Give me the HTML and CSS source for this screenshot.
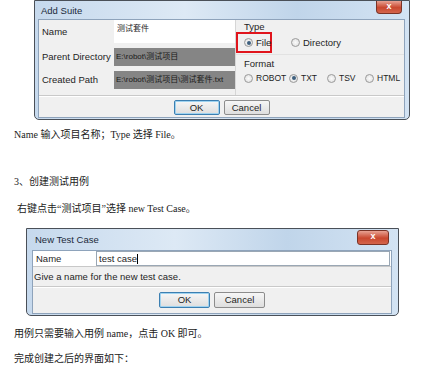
FILE: index.html
```html
<!DOCTYPE html>
<html lang="zh">
<head>
    <meta charset="UTF-8">
    <title>创建测试用例</title>
    <link rel="stylesheet" href="styles.css">
</head>
<body>
    <!-- Add Suite 对话框 -->
    <div class="win suite-win">
        <div class="titlebar">
            <span class="title">Add Suite</span>
            <span class="close">x</span>
        </div>
        <div class="client">
            <div class="suite-top">
                <div class="fields">
                    <div class="row">
                        <span class="label">Name</span>
                        <span class="field white">测试套件</span>
                    </div>
                    <div class="row">
                        <span class="label">Parent Directory</span>
                        <span class="field grey">E:\robot\测试项目</span>
                    </div>
                    <div class="row">
                        <span class="label">Created Path</span>
                        <span class="field grey">E:\robot\测试项目\测试套件.txt</span>
                    </div>
                </div>
                <div class="options">
                    <div class="group-title">Type</div>
                    <div class="radios type-radios">
                        <span class="highlight"><span class="radio on"></span>File</span>
                        <span class="opt"><span class="radio"></span>Directory</span>
                    </div>
                    <div class="group-title format">Format</div>
                    <div class="radios format-radios">
                        <span class="opt wide"><span class="radio"></span>ROBOT</span>
                        <span class="opt"><span class="radio on"></span>TXT</span>
                        <span class="opt"><span class="radio"></span>TSV</span>
                        <span class="opt"><span class="radio"></span>HTML</span>
                    </div>
                </div>
            </div>
            <div class="buttons">
                <span class="btn default">OK</span>
                <span class="btn">Cancel</span>
            </div>
        </div>
    </div>

    <p class="text first">Name 输入项目名称；Type 选择 File。</p>
    <p class="text step">3、创建测试用例</p>
    <p class="text indent">右键点击“测试项目”选择 new Test Case。</p>

    <!-- New Test Case 对话框 -->
    <div class="win case-win">
        <div class="titlebar">
            <span class="title">New Test Case</span>
            <span class="close">x</span>
        </div>
        <div class="client">
            <div class="case-row">
                <span class="label">Name</span>
                <span class="case-input">test case<span class="caret"></span></span>
            </div>
            <div class="hint">Give a name for the new test case.</div>
            <div class="buttons">
                <span class="btn default">OK</span>
                <span class="btn">Cancel</span>
            </div>
        </div>
    </div>

    <p class="text after">用例只需要输入用例 name，点击 OK 即可。</p>
    <p class="text last">完成创建之后的界面如下：</p>
</body>
</html>
```

FILE: styles.css
```css
body {
    margin: 0;
    background: #fff;
    color: #222;
    font-family: "Liberation Serif", "Noto Sans CJK SC", serif;
}

/* Windows 7 style frame */
.win {
    box-sizing: border-box;
    border: 1px solid #4a5058;
    border-radius: 0 0 5px 5px;
    background: linear-gradient(90deg, #c6d9ed, #dde9f5 40%, #c0d5ea 70%, #d3e3f3);
    padding: 0 4px 3px 3px;
    font-family: "Liberation Sans", "Noto Sans CJK SC", sans-serif;
    font-size: 9.5px;
    color: #1e1e1e;
}

.titlebar {
    height: 18px;
    display: flex;
    align-items: center;
    justify-content: space-between;
    padding-left: 3px;
}

.title {
    font-size: 9.5px;
    color: #1b2a3a;
}

.close {
    align-self: flex-start;
    width: 24px;
    height: 12px;
    border: 1px solid #7a3326;
    border-top: none;
    border-radius: 0 0 4px 4px;
    background: linear-gradient(#e8a293, #c9482f 55%, #d4654c);
    color: #fff;
    font-size: 9px;
    font-weight: bold;
    line-height: 11px;
    text-align: center;
    margin-right: 3px;
}

.client {
    background: #f0f0f0;
    border: 1px solid #8ea3bb;
}

/* Add Suite */
.suite-win {
    width: 376px;
    height: 120px;
    margin-left: 34px;
}

.suite-win .client {
    height: 97px;
}

.suite-top {
    display: flex;
    height: 75px;
    border-bottom: 1px solid #c9c9c9;
    box-shadow: 0 1px 0 #fff;
}

.fields {
    display: flex;
    flex-direction: column;
    gap: 4px;
    padding-left: 3px;
    width: 193px;
    border-right: 1px solid #d6d6d6;
}

.row {
    display: flex;
    align-items: center;
}

.label {
    width: 72px;
    flex-shrink: 0;
    white-space: nowrap;
}

.field {
    width: 121px;
    box-sizing: border-box;
    padding: 2px 3px;
    white-space: nowrap;
    overflow: hidden;
    font-size: 8px;
}

.field.white {
    background: #fff;
    height: 23px;
}

.field.grey {
    background: #858585;
    height: 18px;
    color: #1a1a1a;
    margin-top: 1px;
    padding: 2px 2px;
}

.options {
    flex: 1;
    padding-top: 1px;
}

.group-title {
    padding-left: 8px;
    height: 11px;
}

.group-title.format {
    margin-top: 1px;
    border-top: 1px solid #e2e2e2;
    padding-top: 3px;
}

.radios {
    display: flex;
    align-items: center;
    white-space: nowrap;
}

.type-radios {
    height: 21px;
    gap: 19px;
}

.format-radios {
    padding-left: 8px;
    height: 18px;
    font-size: 8.5px;
}

.format-radios .opt {
    width: 38px;
    flex-shrink: 0;
}

.format-radios .opt.wide {
    width: 45px;
}

.highlight {
    display: flex;
    align-items: center;
    box-sizing: border-box;
    width: 36px;
    height: 21px;
    border: 2px solid #e0141c;
    padding-left: 6px;
}

.opt {
    display: flex;
    align-items: center;
}

.radio {
    width: 7px;
    height: 7px;
    flex-shrink: 0;
    border: 1px solid #9a9a9a;
    border-radius: 50%;
    background: radial-gradient(#fbfbfb, #dcdcdc);
    margin-right: 3px;
    position: relative;
}

.radio.on::after {
    content: "";
    position: absolute;
    left: 1.5px;
    top: 1.5px;
    width: 4px;
    height: 4px;
    border-radius: 50%;
    background: #3d5f7e;
}

.buttons {
    display: flex;
    justify-content: center;
    gap: 4px;
    padding-top: 4px;
}

.btn {
    box-sizing: border-box;
    width: 46px;
    height: 15px;
    border: 1px solid #8c8c8c;
    border-radius: 2px;
    background: linear-gradient(#f6f6f6, #dedede);
    text-align: center;
    line-height: 13px;
}

.btn.default {
    border-color: #3c7fb1;
    box-shadow: inset 0 0 0 1px #9fd3f0;
}

/* New Test Case */
.case-win {
    width: 373px;
    height: 88px;
    margin-left: 26px;
    padding-left: 5px;
    padding-right: 6px;
}

.case-win .titlebar {
    height: 21px;
}

.case-win .close {
    width: 30px;
    height: 13px;
    margin-top: 1px;
    border-radius: 3px;
    border-top: 1px solid #7a3326;
}

.case-win .client {
    height: 62px;
}

.case-row {
    display: flex;
    align-items: center;
    height: 15px;
    background: #fff;
    border-bottom: 1px solid #c8c8c8;
    padding-left: 3px;
}

.case-row .label {
    width: 60px;
}

.case-input {
    flex: 1;
    height: 13px;
    line-height: 13px;
    border: 1px solid #9aa7b4;
    padding-left: 2px;
    margin-right: 1px;
}

.caret {
    display: inline-block;
    width: 1px;
    height: 10px;
    background: #000;
    vertical-align: middle;
}

.hint {
    height: 19px;
    line-height: 19px;
    padding-left: 1px;
    border-bottom: 1px solid #c9c9c9;
    box-shadow: 0 1px 0 #fff;
}

.case-win .buttons {
    padding-top: 5px;
}

.case-win .btn {
    width: 51px;
    height: 16px;
    line-height: 14px;
}

/* Texte du document */
.text {
    margin: 0;
    font-size: 10px;
    line-height: 16px;
    padding-left: 14px;
}

.text.first { margin-top: 7px; }
.text.step { margin-top: 31px; }
.text.indent { margin-top: 11px; margin-bottom: 11px; padding-left: 17px; }
.text.after { margin-top: 10px; }
.text.last { margin-top: 9px; }
```
